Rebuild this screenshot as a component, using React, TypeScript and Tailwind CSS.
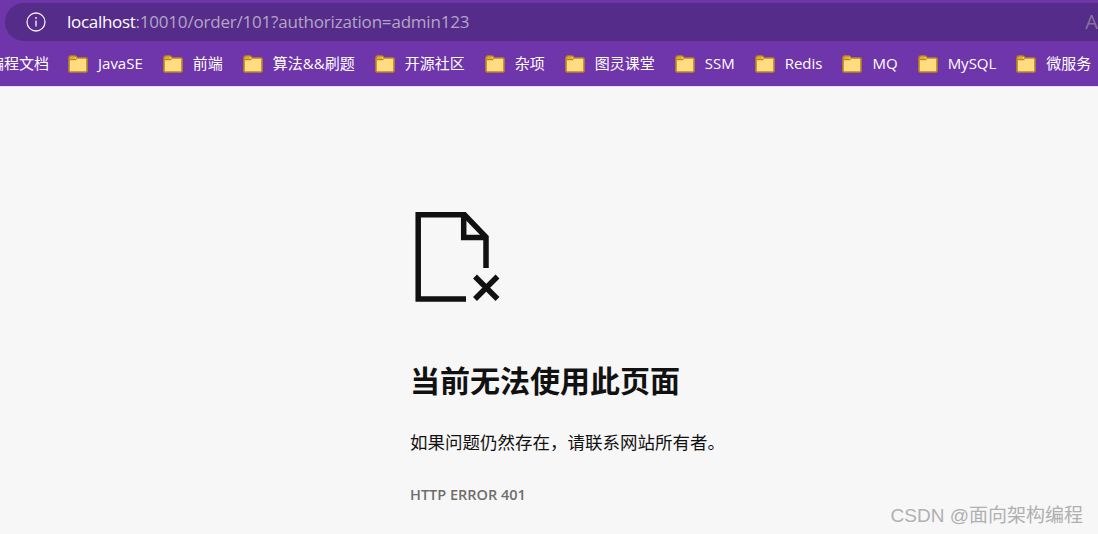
const bookmarks = ['JavaSE', '前端', '算法&&刷题', '开源社区', '杂项', '图灵课堂', 'SSM', 'Redis', 'MQ', 'MySQL', '微服务'];

function FolderIcon() {
  return (
    <svg width="20" height="18" viewBox="0 0 20 18" className="shrink-0">
      <path d="M1 3.5 Q1 1 3 1 H7 Q8.5 1 9 3 H18 Q19 3 19 4 V16 Q19 17 18 17 H2 Q1 17 1 16 Z" fill="#ffdc7f" stroke="#b9861c" strokeWidth="1.6" />
      <path d="M1.5 4.5 H8.5" stroke="#b9861c" strokeWidth="1.4" />
      <path d="M2 2 H7 V4 H2 Z" fill="#e3ae2e" />
    </svg>
  );
}

function InfoIcon() {
  return (
    <svg width="20" height="20" viewBox="0 0 20 20" className="shrink-0">
      <circle cx="10" cy="10" r="9" fill="none" stroke="#f1ecf7" strokeWidth="1.3" />
      <path d="M10 8.5 V14.5" stroke="#f1ecf7" strokeWidth="1.4" />
      <circle cx="10" cy="6" r="0.9" fill="#f1ecf7" />
    </svg>
  );
}

function BrokenFileIcon() {
  return (
    <svg width="92" height="94" viewBox="410 210 92 94" fill="none" stroke="#111111" strokeWidth="5.5" className="block">
      <path d="M466 299 H418.2 V214.8 H464.5 L486 237 V268" />
      <path d="M463.7 215 V237.6 H486" />
      <path d="M475 276.5 L497.5 299 M497.5 276.5 L475 299" />
    </svg>
  );
}

export default function App() {
  return (
    <div className="relative flex h-[534px] w-[1098px] flex-col overflow-hidden bg-[#f7f7f7] font-['Open_Sans','Noto_Sans_CJK_SC',sans-serif]">
      {/* Browser chrome */}
      <div className="h-[87px] shrink-0 border-b border-[#e4dcef] bg-[#6f35ab]">
        <div className="ml-[5px] mt-[3px] flex h-[38px] items-center overflow-hidden rounded-l-[19px] bg-[#562c8b] pl-[21px]">
          <InfoIcon />
          <div className="ml-[21px] whitespace-nowrap text-[17px] tracking-[-0.2px] text-[#b3a6c4]">
            <span className="tracking-[-0.3px] text-white">localhost</span>:10010/order/101?authorization=admin123
          </div>
          <div className="ml-auto mr-0 text-[20px] leading-none text-[#85749b]">A</div>
        </div>
        <div className="ml-[-11px] flex h-[45px] items-center whitespace-nowrap text-[15px] text-white">
          <span className="mr-[19px]">编程文档</span>
          {bookmarks.map((name) => (
            <div key={name} className="mr-[20px] flex items-center gap-[10px]">
              <FolderIcon />
              <span>{name}</span>
            </div>
          ))}
        </div>
      </div>

      {/* Error page */}
      <div className="flex flex-col pl-[410px] pt-[123px]">
        <BrokenFileIcon />
        <h1 className="mt-[55px] text-[30px] font-bold leading-[44px] text-[#111111]">当前无法使用此页面</h1>
        <p className="mt-[26px] text-[17.5px] leading-[26px] text-[#111111]">如果问题仍然存在，请联系网站所有者。</p>
        <div className="mt-[30px] text-[14.5px] font-semibold leading-[20px] text-[#6e6e6e]">HTTP ERROR 401</div>
      </div>

      {/* Watermark */}
      <div className="absolute bottom-[7px] right-[15px] font-['Liberation_Sans','Noto_Sans_CJK_SC',sans-serif] text-[19px] leading-[22px] text-[#b0b0b0]">
        CSDN @面向架构编程
      </div>
    </div>
  );
}
